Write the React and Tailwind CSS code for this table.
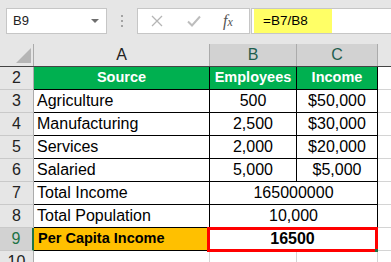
import React from "react";

const rows = [
  { n: 3, a: "Agriculture", b: "500", c: "$50,000" },
  { n: 4, a: "Manufacturing", b: "2,500", c: "$30,000" },
  { n: 5, a: "Services", b: "2,000", c: "$20,000" },
  { n: 6, a: "Salaried", b: "5,000", c: "$5,000" },
  { n: 7, a: "Total Income", bc: "165000000" },
  { n: 8, a: "Total Population", bc: "10,000" },
];

function RowHead({ n, selected }) {
  return (
    <div
      className={
        "w-[34px] shrink-0 flex items-center justify-center text-[16px] border-b border-[#c9c9c9] " +
        (selected
          ? "bg-[#d2d2d2] text-[#217346] border-r-2 border-r-[#217346]"
          : "bg-[#e6e6e6] text-[#222] border-r border-r-[#ababab]")
      }
    >
      {n}
    </div>
  );
}

export default function App() {
  return (
    <div className="w-[391px] h-[262px] overflow-hidden bg-[#e6e6e6] font-['Liberation_Sans',_Arial,_sans-serif] text-black">
      {/* Formula bar */}
      <div className="h-[44px] flex items-start pt-[8px] pl-[6px]">
        <div className="w-[101px] h-[26px] bg-white border border-[#c6c6c6] flex items-center pl-[6px] pr-[6px] text-[13px] text-[#222]">
          <span className="flex-1">B9</span>
          <svg width="8" height="5" viewBox="0 0 8 5" className="mr-[1px]">
            <polygon points="0,0 8,0 4,4" fill="#6e6e6e" />
          </svg>
        </div>
        <div className="w-[30px] h-[26px] flex flex-col items-center justify-center gap-[3px]">
          <div className="w-[2px] h-[2px] bg-[#a3a3a3]" />
          <div className="w-[2px] h-[2px] bg-[#a3a3a3]" />
          <div className="w-[2px] h-[2px] bg-[#a3a3a3]" />
        </div>
        <div className="w-[113px] h-[26px] bg-white border border-[#c6c6c6] flex items-center">
          <svg width="12" height="12" viewBox="0 0 12 12" className="ml-[13px]">
            <path d="M1 1 L11 11 M11 1 L1 11" stroke="#b5b5b5" strokeWidth="1.3" fill="none" />
          </svg>
          <svg width="14" height="12" viewBox="0 0 14 12" className="ml-[24px]">
            <path d="M1 6.5 L5 10.5 L13 1.5" stroke="#bdbdbd" strokeWidth="2" fill="none" />
          </svg>
          <span className="ml-[22px] italic font-['Liberation_Serif',_serif] text-[16px] text-[#555] leading-none">
            f<span className="text-[12px]">x</span>
          </span>
        </div>
        <div className="flex-1 h-[26px] ml-[1px] bg-white border border-[#c6c6c6] border-r-0 flex items-stretch pl-[2px]">
          <div className="w-[78px] bg-[#ffff66] flex items-center pl-[9px] text-[13.5px] text-black">
            =B7/B8
          </div>
        </div>
      </div>

      {/* Column headers */}
      <div className="flex h-[22px]">
        <div className="w-[34px] shrink-0 relative border-r border-[#ababab]">
          <svg width="34" height="22" viewBox="0 0 34 22" className="absolute left-0 top-0">
            <polygon points="31,4 31,19 16,19" fill="#b5b5b5" />
          </svg>
        </div>
        <div className="w-[176px] shrink-0 flex items-center justify-center text-[16px] text-[#222] border-r border-[#ababab]">
          A
        </div>
        <div className="w-[87px] shrink-0 flex items-center justify-center text-[16px] text-[#1f5e4e] bg-[#d2d2d2] border-r border-[#ababab]">
          B
        </div>
        <div className="w-[81px] shrink-0 flex items-center justify-center text-[16px] text-[#1f5e4e] bg-[#d2d2d2] border-r border-[#ababab]">
          C
        </div>
        <div className="flex-1" />
      </div>

      {/* Grid */}
      <div className="border-t border-[#444]">
        {/* Row 2 */}
        <div className="flex h-[23px]">
          <RowHead n={2} />
          <div className="w-[176px] shrink-0 bg-[#00b050] text-white font-bold text-[14.5px] flex items-center justify-center border-r border-b border-black">
            Source
          </div>
          <div className="w-[87px] shrink-0 bg-[#00b050] text-white font-bold text-[14.5px] flex items-center justify-center border-r border-b border-black">
            Employees
          </div>
          <div className="w-[81px] shrink-0 bg-[#00b050] text-white font-bold text-[14.5px] flex items-center justify-center border-r border-b border-black">
            Income
          </div>
          <div className="flex-1 bg-white border-b border-[#d4d4d4]" />
        </div>

        {rows.map((r) => (
          <div key={r.n} className="flex h-[23px]">
            <RowHead n={r.n} />
            <div className="w-[176px] shrink-0 bg-white text-[16px] flex items-center pl-[3px] border-r border-b border-black">
              {r.a}
            </div>
            {r.bc ? (
              <div className="w-[168px] shrink-0 bg-white text-[16px] flex items-center justify-center border-r border-b border-black">
                {r.bc}
              </div>
            ) : (
              <>
                <div className="w-[87px] shrink-0 bg-white text-[16px] flex items-center justify-center border-r border-b border-black">
                  {r.b}
                </div>
                <div className="w-[81px] shrink-0 bg-white text-[16px] flex items-center justify-center border-r border-b border-black">
                  {r.c}
                </div>
              </>
            )}
            <div className="flex-1 bg-white border-b border-[#d4d4d4]" />
          </div>
        ))}

        {/* Row 9 */}
        <div className="flex h-[23px]">
          <RowHead n={9} selected />
          <div className="w-[175px] shrink-0 bg-[#ffc000] font-bold text-[14.5px] flex items-center pl-[4px] border-r border-b border-black">
            Per Capita Income
          </div>
          <div className="w-[168px] shrink-0 bg-white font-bold text-[16px] flex items-center justify-center border-r border-b border-black relative">
            16500
            <div className="absolute -top-[1px] -left-[2px] -right-[2px] -bottom-[2px] border-[3px] border-[#ff0000]">
              <div className="absolute -right-[3px] -bottom-[3px] w-[3px] h-[3px] bg-[#217346]" />
            </div>
          </div>
          <div className="flex-1 bg-white border-b border-[#d4d4d4]" />
        </div>

        {/* Row 10 */}
        <div className="flex h-[23px]">
          <RowHead n={10} />
          <div className="w-[176px] shrink-0 bg-white border-r border-b border-[#d4d4d4]" />
          <div className="w-[87px] shrink-0 bg-white border-r border-b border-[#d4d4d4]" />
          <div className="w-[81px] shrink-0 bg-white border-r border-b border-[#d4d4d4]" />
          <div className="flex-1 bg-white border-b border-[#d4d4d4]" />
        </div>
      </div>
    </div>
  );
}
